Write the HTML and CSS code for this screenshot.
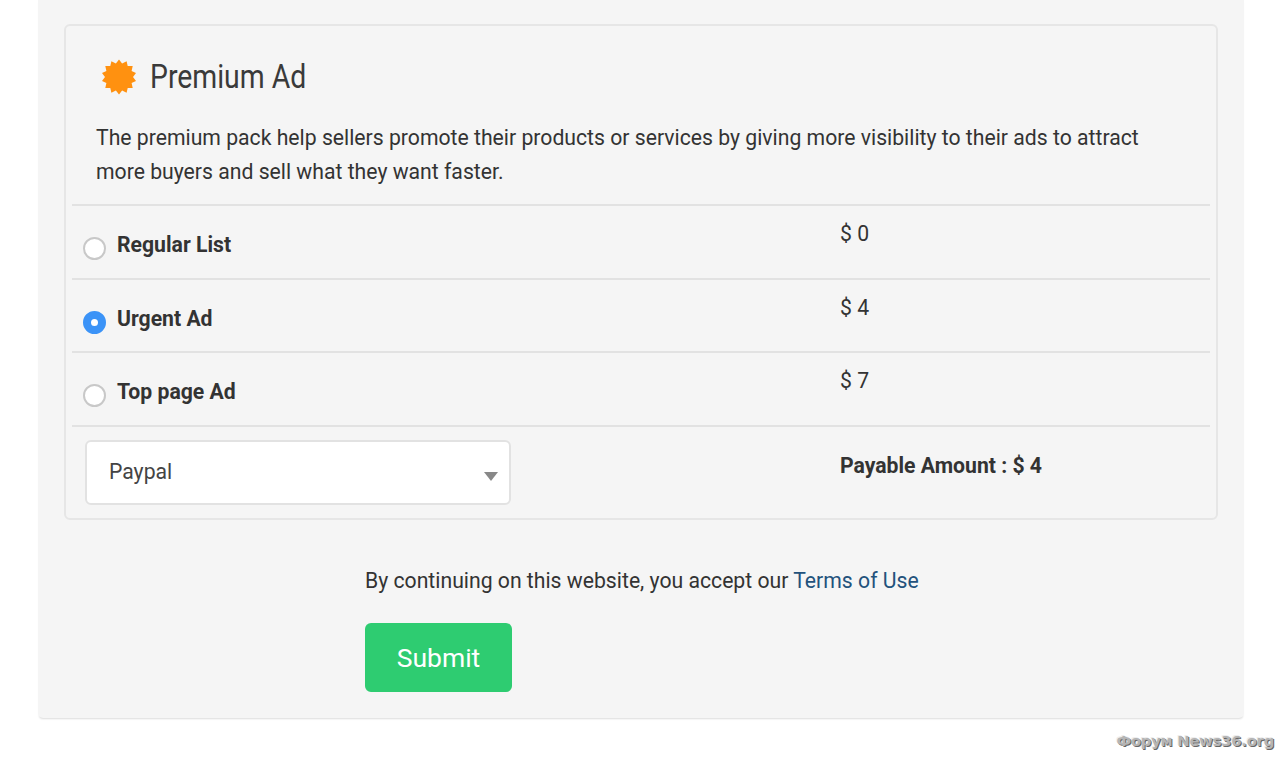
FILE: index.html
```html
<!DOCTYPE html>
<html lang="en">
<head>
<meta charset="utf-8">
<title>Premium Ad</title>
<link rel="stylesheet" href="styles.css">
</head>
<body>
<main class="panel">
  <section class="card">
    <div class="card-head">
      <svg class="burst" viewBox="0 0 36 36" aria-hidden="true"><polygon points="18,0.5 21.1,4.4 25.6,2.2 26.7,7 31.7,7.1 30.6,11.9 35,14.1 32,18 35,21.9 30.6,24.1 31.7,28.9 26.7,29 25.6,33.8 21.1,31.6 18,35.5 14.9,31.6 10.4,33.8 9.3,29 4.3,28.9 5.4,24.1 1,21.9 4,18 1,14.1 5.4,11.9 4.3,7.1 9.3,7 10.4,2.2 14.9,4.4"/></svg>
      <h2 class="card-title">Premium Ad</h2>
    </div>
    <p class="card-text">The premium pack help sellers promote their products or services by giving more visibility to their ads to attract more buyers and sell what they want faster.</p>
    <div class="options">
      <div class="option">
        <label class="option-label"><input class="radio" type="radio" name="pack"><span>Regular List</span></label>
        <div class="price">$ 0</div>
      </div>
      <div class="option">
        <label class="option-label"><input class="radio" type="radio" name="pack" checked><span>Urgent Ad</span></label>
        <div class="price">$ 4</div>
      </div>
      <div class="option">
        <label class="option-label"><input class="radio" type="radio" name="pack"><span>Top page Ad</span></label>
        <div class="price">$ 7</div>
      </div>
      <div class="option option-pay">
        <div class="select-cell">
          <div class="select-wrap">
            <select class="select"><option>Paypal</option></select>
          </div>
        </div>
        <div class="payable">Payable Amount : $ 4</div>
      </div>
    </div>
  </section>
  <div class="actions">
    <p class="terms">By continuing on this website, you accept our <a class="terms-link" href="#">Terms of Use</a></p>
    <button class="submit" type="button">Submit</button>
  </div>
</main>
<div class="watermark">Форум News36.org</div>
</body>
</html>
```

FILE: styles.css
```css
* { box-sizing: border-box; }
html, body { margin: 0; height: 757px; overflow: hidden; background: #fff; }
body { font-family: Roboto, "Liberation Sans", sans-serif; color: #333; font-size: 21.2px; line-height: 34px; position: relative; }
.panel { margin: 0 36px 0 38px; height: 718px; background: #f5f5f5; border-radius: 0 0 5px 5px; box-shadow: 0 2px 2px -1px rgba(0,0,0,.14); padding: 24px 26px 0; }
.card { height: 496px; border: 2px solid #e6e6e6; border-radius: 6px; padding: 0 6px; }
.card-head { display: flex; align-items: center; height: 100px; padding: 1px 0 0 29px; }
.burst { width: 36px; height: 36px; fill: #ff9110; flex: none; }
.card-title { margin: 0 0 0 13px; font-weight: 400; font-size: 33px; line-height: 40px; color: #3a3a3a; transform: scaleX(.86); transform-origin: left center; white-space: nowrap; }
.card-text { margin: -5px 0 0; padding: 0 24px; height: 83px; }
.options { display: block; }
.option { display: grid; grid-template-columns: 768px 1fr; height: 73.5px; border-top: 2px solid #e2e2e2; }
.option-label { display: flex; align-items: flex-start; padding: 22px 0 0 11px; font-weight: 700; }
.radio { appearance: none; -webkit-appearance: none; width: 23px; height: 23px; margin: 9px 11px 0 0; border: 2px solid #c8c8c8; border-radius: 50%; background: #fff; flex: none; }
.radio:checked { border: 8px solid #3b93f7; }
.price { padding-top: 11px; }
.option-pay { height: 81px; }
.select-cell { padding: 13px 0 0 13px; }
.select-wrap { position: relative; width: 426px; height: 65px; }
.select-wrap::after { content: ""; position: absolute; right: 13px; top: 32px; border-left: 7px solid transparent; border-right: 7px solid transparent; border-top: 9px solid #888; }
.select { appearance: none; -webkit-appearance: none; width: 100%; height: 100%; padding: 0 0 0 22px; border: 2px solid #e2e2e2; border-radius: 6px; background: #fff; color: #444; font: inherit; }
.payable { font-weight: 700; padding-top: 22px; }
.actions { padding: 44px 0 0 301px; }
.terms { margin: 0; height: 47px; white-space: nowrap; }
.terms-link { color: #23527c; text-decoration: none; }
.submit { display: block; margin-top: 12px; width: 147px; height: 69px; border: 0; border-radius: 6px; background: #2ecc71; color: #fff; font: 400 26.5px Roboto, sans-serif; }
.watermark { position: absolute; right: 6px; top: 729px; font: 700 14.8px/24px "DejaVu Sans", sans-serif; color: #b5b5b5; letter-spacing: -.25px; text-shadow: 1px 1px 0 #666, -1px -1px 0 #eee; white-space: nowrap; }
```
